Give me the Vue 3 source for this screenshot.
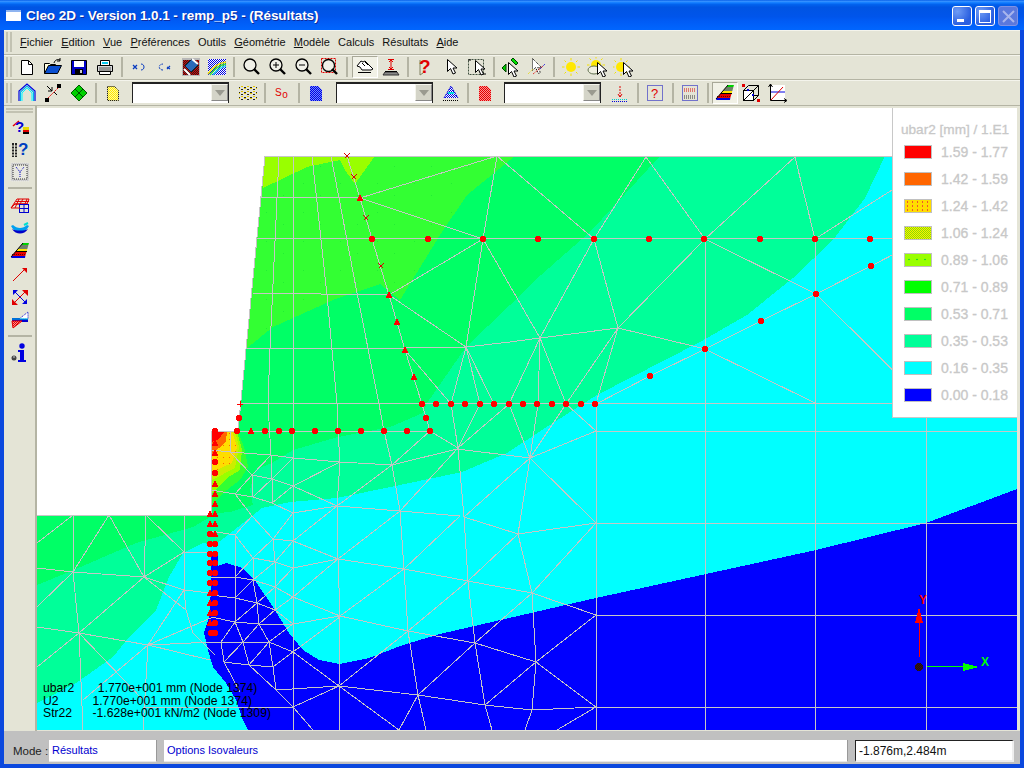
<script setup>
const arrowShape = (dx = 0, dy = 0, fill = '#fff', stroke = '#000') =>
  `<path transform="translate(${dx} ${dy})" d="M6.5 2.5v12l3-3 2.5 5.5 2.5-1-2.5-5h4z" fill="${fill}" stroke="${stroke}"/>`
const sunShape = (cx, cy) =>
  `<circle cx="${cx}" cy="${cy}" r="5" fill="#ffe800"/><path d="M${cx} ${cy - 9}v2.500M${cx} ${cy + 6.500}v2.500M${cx - 9} ${cy}h2.500M${cx + 6.500} ${cy}h2.500M${cx - 6.500} ${cy - 6.500}l1.500 1.500M${cx + 6.500} ${cy - 6.500}l-1.500 1.500M${cx - 6.500} ${cy + 6.500}l1.500-1.500M${cx + 6.500} ${cy + 6.500}l-1.500-1.500" stroke="#f4e000" fill="none"/>`
const layersIcon =
  '<polygon points="13,2 19,2 18.400,4 11.300,4" fill="#00d000"/><polygon points="11.300,4 18.400,4 17.300,8 7.900,8" fill="#70806a"/><polygon points="7.900,8 17.300,8 16.700,10 6.100,10" fill="#ffe800"/><polygon points="6.100,10 16.700,10 15.300,15 1.900,15" fill="#e80000"/><polygon points="1.900,15 15.300,15 15,17 1,17" fill="#0000e0"/><path d="M1 16L13 2M6 10.500h11" stroke="#000" fill="none"/><path d="M2 13.500h13" stroke="#600" stroke-dasharray="1 1"/>'

const I = {
  new: '<path d="M4.5 3.5h7l4 4v10h-11z" fill="#fff" stroke="#000"/><path d="M11.5 3.5v4h4" fill="none" stroke="#000"/>',
  open: '<path d="M1.5 16.5v-10h5l1 1h5v2" fill="#ffffe0" stroke="#000"/><path d="M1.5 16.5l4-8h13l-4 8z" fill="#0a4fd0" stroke="#000"/><path d="M11 6c1-3 3-4 6-3M17 1v3h-3" fill="none" stroke="#000"/>',
  save: '<path d="M2.5 3.5h15v14h-15z" fill="#0000c8" stroke="#000"/><rect x="5" y="4" width="10" height="6" fill="#fff"/><rect x="6" y="12" width="8" height="5" fill="#000"/><rect x="11" y="13" width="2" height="3" fill="#ccc"/>',
  print: '<path d="M5.5 3.5h9v5h-9z" fill="#fff" stroke="#000"/><path d="M7 5h6v2H7z" fill="#08c8f0"/><path d="M2.5 8.5h15v6h-15z" fill="#d8d8d8" stroke="#000"/><path d="M4.5 14.5h11v3h-11z" fill="#fff" stroke="#000"/><path d="M4 11h12M4 13h12" stroke="#555"/>',
  undo: '<path d="M4 8l4 4M8 8l-4 4" stroke="#0a3cc0" stroke-width="1.3"/><path d="M12 7c4 0 4 6 0 6" fill="none" stroke="#0a3cc0"/>',
  redo: '<path d="M8 13C3 13 3 7 8 7" fill="none" stroke="#0a3cc0" stroke-dasharray="2 1"/><path d="M12 12l3-3M12 10l3 2" stroke="#0a3cc0" stroke-width="1.2"/>',
  map: '<rect x="1" y="1" width="18" height="18" fill="#b8b8b8"/><rect x="2" y="3" width="16" height="15" fill="url(#chkR)"/><path d="M4 9l7-7 6 6-7 7z" fill="#2a6ab8" stroke="#123"/><path d="M3 12l6 6M11 2l6 5" stroke="#fff" stroke-width="2"/>',
  rain: '<rect x="1" y="2" width="18" height="16" fill="url(#chkB)"/><path d="M1 17c5-8 11-11 18-12" fill="none" stroke="#f4e400" stroke-width="1.5"/><path d="M3 18c5-7 10-10 16-11" fill="none" stroke="#30e030" stroke-width="1.5"/><path d="M6 18c4-5 8-8 13-9" fill="none" stroke="#30d8f0" stroke-width="1.5"/>',
  zoom: '<circle cx="9" cy="8" r="6" fill="#f0f0e8" stroke="#000" stroke-width="1.3"/><path d="M13 12l5 5" stroke="#000" stroke-width="2.4"/>',
  zplus: '<circle cx="9" cy="8" r="6" fill="#f0f0e8" stroke="#000" stroke-width="1.3"/><path d="M13 12l5 5" stroke="#000" stroke-width="2.4"/><path d="M9 5v6M6 8h6" stroke="#000"/>',
  zminus: '<circle cx="9" cy="8" r="6" fill="#f0f0e8" stroke="#000" stroke-width="1.3"/><path d="M13 12l5 5" stroke="#000" stroke-width="2.4"/><path d="M6 8h6" stroke="#000"/>',
  zfit: '<rect x="2.5" y="1.5" width="14" height="14" fill="none" stroke="#e00000" stroke-dasharray="2 1"/><circle cx="9.5" cy="8.5" r="6" fill="#f0f0e8" stroke="#000" stroke-width="1.3"/><path d="M13 12l5 5" stroke="#000" stroke-width="2.4"/>',
  hand: '<path d="M2 9l4-5 2 1 2-1 3 3 5 5-2 1H7l-2-3z" fill="#fff" stroke="#000"/><path d="M7 6l3 3M10 5l3 3M3 15.500h13" stroke="#000" fill="none"/>',
  ibar: '<path d="M4 15h12l2 3H2z" fill="#888" stroke="#333"/><path d="M7 2.500h6M10 3v9M7 12.500h6" stroke="#e00000"/><path d="M8 5l2-2 2 2M8 10l2 2 2-2" stroke="#e00000" fill="none"/><path d="M4 14.500h12" stroke="#000"/>',
  help: '<path d="M5 18V3M5 18l3-2" stroke="#808060" fill="none"/><text x="4" y="16" font-family="Liberation Sans" font-weight="700" font-size="19" fill="#e00000">?</text>',
  arrow: arrowShape(),
  arrowbox: '<rect x="1.500" y="2.500" width="15" height="15" fill="none" stroke="#405040" stroke-dasharray="2 1"/><path d="M1 3l3 0M16 17l3 0" stroke="#000"/>' + arrowShape(2, 1),
  arrowg: '<path d="M5 7l-4 4 4 4z" fill="#00d000" stroke="#004000"/><path d="M12 1l5 5-2 2-5-5z" fill="#00e000" stroke="#004000"/>' + arrowShape(1, 3),
  arrowd: '<path d="M5.500 1.500v12l3-3 3 6 2-1-3-5h4z" fill="#fff" stroke="#000" stroke-dasharray="1 1"/><path d="M1 17l5-5" stroke="#e8d800" stroke-dasharray="1 1"/><path d="M13 12l5-5" stroke="#0000e0" stroke-dasharray="1 1"/><path d="M6 17l10-8" stroke="#e00000" stroke-dasharray="1 1"/>',
  sun: sunShape(10, 10),
  suncl: sunShape(9, 8) + '<ellipse cx="7" cy="13" rx="6" ry="4" fill="#f0f0e0" stroke="#607050"/>' + arrowShape(4, 3),
  sunar: sunShape(8, 10) + arrowShape(4, 3),
  house: '<path d="M2 18V8l8-7 8 7v10" fill="none" stroke="#0000e0" stroke-width="1.200"/><path d="M3.500 18V9l6.500-6 6.500 6v9" fill="none" stroke="#00b0f0" stroke-width="1.200"/><path d="M5 18V10l5-5 5 5v8" fill="none" stroke="#00ffff"/>',
  line: '<path d="M3 17L17 3" stroke="#e00000" stroke-dasharray="2 1"/><rect x="14" y="1" width="4" height="4" fill="#000"/><rect x="2" y="15" width="4" height="4" fill="#000"/><path d="M4 3l5 5M9 4v4H5M14 12l-3-3" stroke="#000" fill="none"/>',
  diamond: '<path d="M10 2l8 8-8 8-8-8z" fill="#00d000" stroke="#006000"/><path d="M6 6l8 8M14 6l-8 8M10 2l8 8" stroke="#005000" fill="none"/>',
  docy: '<path d="M4.500 3.500h7l4 4v10h-11z" fill="url(#chkYe)" stroke="#000" stroke-dasharray="1 1"/>',
  dots: '<rect x="1" y="2" width="18" height="16" fill="url(#chkY)"/>',
  so: '<text x="3" y="13" font-family="Liberation Sans" font-size="10" fill="#e00000" letter-spacing=".5">S<tspan dy="2">o</tspan></text>',
  docb: '<path d="M4 3h8l4 4v11H4z" fill="url(#chkB2)"/>',
  trib: '<path d="M10 3l-7 12h14z" fill="url(#chkB)"/><path d="M7 10h6" stroke="#00e0e0" stroke-width="2"/><path d="M3 15l7-12 7 12" fill="none" stroke="#0000e0" stroke-dasharray="2 1"/><path d="M2 17.500h16" stroke="#000" stroke-dasharray="1 1"/>',
  docr: '<path d="M4 3h8l4 4v11H4z" fill="url(#chkR2)"/>',
  arr: '<path d="M10 3v11" stroke="#e00000" stroke-dasharray="2 1"/><path d="M8 11l2 3 2-3" fill="none" stroke="#e00000"/><path d="M2 16.500h16" stroke="#00d0d0" stroke-dasharray="1 1"/><path d="M2 18.500h16" stroke="#0000e0" stroke-dasharray="1 1"/>',
  qbox: '<rect x="2.500" y="2.500" width="15" height="15" fill="none" stroke="#0000c0" stroke-dasharray="1 1"/><text x="6" y="15" font-family="Liberation Sans" font-size="13" fill="#e00000">?</text>',
  tbox: '<rect x="2.500" y="2.500" width="15" height="15" fill="none" stroke="#0000c0" stroke-dasharray="1 1"/><path d="M4 6h12M4 8h12" stroke="#e00000" stroke-dasharray="1 1"/><path d="M4 13h12M4 15h12" stroke="#333" stroke-dasharray="1 1"/>',
  layers: layersIcon,
  cube: '<rect x="2.500" y="7.500" width="10" height="10" fill="#fff" stroke="#000"/><path d="M7.500 2.500h10v10h-5M2.500 7.500l5-5M12.500 7.500l5-5M12.500 17.500l5-5M2.500 17.500l10-10" fill="none" stroke="#000"/><rect x="1" y="1" width="3" height="3" fill="#e00000"/><rect x="16" y="16" width="3" height="3" fill="#e00000"/><rect x="6" y="6" width="2" height="2" fill="#0000e0"/><rect x="11" y="11" width="2" height="2" fill="#0000e0"/>',
  axes: '<rect x="3" y="2" width="15" height="15" fill="#fff"/><path d="M3.500 1v16.500H19" fill="none" stroke="#000"/><path d="M1.500 4l2-3 2 3M17 15.500l3 2-3 2" fill="none" stroke="#000"/><path d="M4 9h14" stroke="#0000e0"/><path d="M4 17L16 4" stroke="#e00000"/>',
  qcolor: '<path d="M3 8l6-5" stroke="#e00000" stroke-width="1.500"/><text x="5" y="14" font-family="Liberation Sans" font-weight="700" font-size="15" fill="#0000d0">?</text><rect x="13" y="9" width="6" height="3" fill="#e8d800"/><rect x="13" y="12" width="6" height="2" fill="#e00000"/><rect x="13" y="14" width="6" height="2" fill="#000"/>',
  colq: '<path d="M2 3h2v14H2zM5 3h2v14H5z" fill="#222"/><path d="M2 6h5M2 9h5M2 12h5M2 15h5" stroke="#e4e4d6"/><text x="8" y="15" font-family="Liberation Sans" font-weight="700" font-size="17" fill="#0040c0">?</text>',
  funnel: '<rect x="1" y="1" width="18" height="18" fill="#c8c8c8" stroke="#e8e8e8" stroke-dasharray="1 1"/><path d="M3 3h14v14H3z" fill="#e8e8e0" stroke="#333" stroke-dasharray="1 1"/><path d="M6 5l4 5 4-5M10 10v5" stroke="#0000c0" fill="none" stroke-dasharray="1 1"/>',
  grid: '<path d="M1 13l6-9h12l-2 5H5z" fill="none" stroke="#e00000"/><path d="M4 9h14M6 6.500h13M9 4l-4 9M13 4l-3 5M17 4l-2 5" stroke="#e00000"/><rect x="9.500" y="9.500" width="9" height="8" fill="none" stroke="#0000d0"/><path d="M14 9v8M9 13.500h10" stroke="#0000d0"/><path d="M1 13h9" stroke="#e00000"/>',
  bowl: '<path d="M1 8c4 8 14 8 18 0l-2-1c-4 4-10 4-14 0z" fill="#00a0f0"/><path d="M2 11c4 6 12 6 16 0-4 2-12 2-16 0z" fill="#0000c8"/><path d="M14 7l4-2" stroke="#00e0d0" stroke-width="2"/>',
  vec: '<path d="M3 17L15 5" stroke="#e00000"/><path d="M12 4h5v5z" fill="#e00000"/>',
  vecs: '<path d="M3 17L17 3" stroke="#e00000"/><path d="M3 3l14 14" stroke="#0000e0"/><path d="M12 3h6v6zM2 12v6h6z" fill="#e00000"/><path d="M3 8V3h5zM17 12v5h-5z" fill="#0000e0"/>',
  beam: '<path d="M2 9h16M2 11h16" stroke="#0000d0" stroke-width="2"/><path d="M2 11h10L3 18z" fill="url(#chkR2)" stroke="#e00000"/><path d="M9 9l9-7v7z" fill="#fff" stroke="#0000d0" stroke-dasharray="1 1"/><path d="M2 9h16" stroke="#00e0e0"/>',
  info: '<circle cx="12" cy="3" r="2.700" fill="#0000e0"/><path d="M8 7h6v10h2v2H8v-2h2v-8H8z" fill="#0000e0"/><circle cx="4" cy="15" r="2.500" fill="#444"/><path d="M3 14h2" stroke="#ccc"/>'
}

const tb1 = [
  ['new'], ['open'], ['save'], ['print'], 'sep8',
  ['undo'], ['redo'], ['map'], ['rain'], 'sep8',
  ['zoom'], ['zplus'], ['zminus'], ['zfit'], 'sep10',
  ['hand', true], ['ibar'], 'sep8',
  ['help'], ['arrow'], ['arrowbox'], 'sep8',
  ['arrowg'], ['arrowd'], 'sep8',
  ['sun'], ['suncl'], ['sunar']
]
const tb2 = [
  ['house'], ['line'], ['diamond'], 'sep8', ['docy'], 'combo',
  ['dots'], 'sep8', ['so'], 'sep8', ['docb'], 'combo2',
  ['trib'], 'sep8', ['docr'], 'combo',
  ['arr'], 'sep9', ['qbox'], 'sep9', ['tbox'], 'sep9',
  ['layers', true], ['cube'], ['axes']
]
const left1 = ['qcolor', 'colq', 'funnel']
const left2 = ['grid', 'bowl', 'layers', 'vec', 'vecs', 'beam']

const menu = [
  ['F', 'ichier'], ['E', 'dition'], ['V', 'ue'], ['P', 'références'], ['', 'Outils'],
  ['G', 'éométrie'], ['M', 'odèle'], ['', 'Calculs'], ['', 'Résultats'], ['A', 'ide']
]

const legend = [
  ['#ff0000', '1.59 - 1.77', ''],
  ['#ff6600', '1.42 - 1.59', ''],
  ['#ffdd00', '1.24 - 1.42', 'sw-dots'],
  ['#ccee00', '1.06 - 1.24', 'sw-dith'],
  ['#99ff00', '0.89 - 1.06', 'sw-sparse'],
  ['#00ff00', '0.71 - 0.89', ''],
  ['#00ff66', '0.53 - 0.71', ''],
  ['#00ff99', '0.35 - 0.53', ''],
  ['#00ffff', '0.16 - 0.35', ''],
  ['#0000ff', '0.00 - 0.18', '']
]

const readout = [
  'ubar2       1.770e+001 mm (Node 1374)',
  'U2          1.770e+001 mm (Node 1374)',
  'Str22      -1.628e+001 kN/m2 (Node 1309)'
]

const zones = [
  ['#00ffff', '37,108 1017,108 1017,730 37,730'],
  ['#00ff99', '885,156 865,198 833,240 793,278 747,315 700,342 597,395 542,430 507,453 462,472 400,485 337,498 290,502 262,508 238,527 215,545 203,543 183,553 169,577 156,610 129,637 113,657 76,683 37,703 37,515 211,431 265,156'],
  ['#00ff66', '660,156 590,232 533,282 510,305 466,347 427,403 423,413 390,427 338,437 293,450 272,463 255,470 250,490 253,505 230,512 217,513 193,527 136,543 69,572 37,585 37,515 211,431 265,156'],
  ['url(#lg)', '515,156 467,195 440,235 400,300 380,284 333,300 273,327 247,348 230,370 265,156'],
  ['#99ff00', '265,156 375,156 355,184 345,170 340,160 307,167 263,188 258,170'],
  ['#0000ff', '1017,489 926,523 816,550 706,574 596,598 440,634 403,645 369,658 339,664 319,660 303,650 289,633 273,607 256,582 243,568 226,563 218,566 218,552 211,552 211,590 209,617 204,633 208,650 213,667 226,683 236,700 243,720 248,730 1017,730'],
  ['#33ff33', '238,431 245,450 248,467 240,480 223,493 212,505 211,431'],
  ['#99ff00', '237,431 242,450 240,470 227,478 212,493 211,431'],
  ['#ccee00', '235,431 239,447 235,468 212,480 211,431'],
  ['url(#yel)', '232,431 237,447 232,463 212,472 211,431'],
  ['#ff6600', '227,431 226,442 212,454 211,431'],
  ['#ff0000', '225,431 218,440 211,442 211,431']
]

const mesh = [
  [257, 238.5, 1017, 238.5], [261, 197, 360, 197.5], [252, 293, 389, 295],
  [246, 348, 405, 348, 466, 347, 510, 342, 540, 338, 618, 328, 693, 346, 705, 349],
  [241, 403.5, 1017, 403.5], [211, 431, 430, 431], [596, 431, 1017, 431],
  [596, 523, 1017, 523], [596, 615, 1017, 615], [596, 707, 1017, 707],
  [279, 156, 270, 348, 268, 404, 271, 455],
  [293, 156, 293, 730],
  [312, 156, 327, 295, 337, 404, 338, 431, 340, 462, 337, 506, 338, 559, 340, 616, 339, 686, 340, 730],
  [331, 156, 357, 293, 379, 404, 384, 431, 392, 465, 400, 511, 404, 569, 408, 631, 418, 695, 426, 730],
  [347, 156, 360, 198, 372, 239, 389, 295, 405, 350, 422, 404, 430, 431],
  [458, 448, 464, 517, 468, 581, 475, 643, 485, 705, 492, 730],
  [530, 458, 518, 534, 532, 593, 536, 662, 532, 710, 525, 730],
  [596, 404, 596, 730], [705, 239, 706, 730], [815, 239, 816, 730], [926, 403, 926, 730],
  [360, 198, 497, 156], [360, 198, 483, 239], [389, 295, 483, 239], [483, 239, 497, 156],
  [497, 156, 594, 239], [389, 295, 466, 347], [466, 347, 483, 239], [483, 239, 540, 338],
  [594, 239, 540, 338], [594, 239, 646, 157], [646, 157, 705, 239], [705, 239, 795, 157],
  [795, 157, 815, 239], [815, 239, 892, 190], [594, 239, 618, 328], [705, 239, 618, 328],
  [705, 239, 816, 294, 926, 403], [705, 349, 815, 403],
  [596, 404, 650, 376, 705, 349, 761, 321, 816, 294, 871, 266, 960, 220],
  [540, 338, 509, 404], [540, 338, 538, 404], [540, 338, 566, 404], [618, 328, 566, 404],
  [618, 328, 597, 400], [466, 347, 451, 404], [466, 347, 480, 404], [466, 347, 494, 404],
  [405, 350, 451, 404], [538, 404, 530, 458], [566, 404, 530, 458], [509, 404, 530, 458],
  [566, 404, 596, 431], [596, 431, 530, 458], [530, 458, 596, 523], [530, 458, 464, 517],
  [596, 523, 518, 534, 464, 517], [596, 523, 532, 593], [518, 534, 468, 581], [468, 581, 532, 593, 596, 615],
  [532, 593, 475, 643], [475, 643, 536, 662, 596, 615], [536, 662, 596, 707], [536, 662, 485, 705],
  [485, 705, 532, 710, 596, 707], [596, 707, 540, 740],
  [457, 449, 530, 458], [457, 449, 392, 465], [430, 431, 458, 448], [458, 448, 480, 404],
  [458, 448, 509, 404], [451, 404, 458, 448], [392, 465, 430, 431], [340, 462, 392, 465], [400, 511, 458, 448],
  [400, 511, 460, 516], [400, 511, 337, 506], [337, 506, 392, 465], [293, 458, 340, 462],
  [211, 450, 230, 452, 271, 455, 293, 458], [230, 431, 230, 452, 252, 475, 272, 479, 293, 486, 337, 506],
  [271, 455, 252, 475], [271, 455, 272, 479], [293, 458, 272, 479], [340, 462, 293, 486],
  [252, 475, 235, 494, 211, 490], [252, 475, 253, 497, 272, 503, 293, 513, 337, 506], [235, 494, 253, 497],
  [272, 479, 253, 497], [272, 479, 272, 503], [293, 486, 272, 503],
  [400, 511, 338, 559], [338, 559, 404, 569], [404, 569, 460, 516], [404, 569, 468, 581], [408, 631, 468, 581],
  [408, 631, 475, 643], [408, 631, 340, 616, 404, 569],
  [338, 559, 293, 568, 275, 562, 253, 558, 235, 535, 211, 531], [293, 541, 338, 559],
  [293, 541, 273, 539, 252, 516, 235, 494], [293, 513, 273, 539], [337, 506, 293, 541], [273, 539, 253, 558],
  [252, 516, 235, 535], [275, 562, 273, 539], [293, 541, 275, 562], [253, 558, 235, 577, 211, 577],
  [253, 558, 253, 580, 275, 587, 293, 597, 340, 616], [275, 562, 253, 580], [275, 562, 275, 587], [293, 568, 275, 587],
  [338, 559, 293, 597], [235, 535, 235, 622, 221, 642], [235, 577, 253, 580], [253, 580, 235, 598, 211, 595],
  [253, 580, 257, 603, 275, 610, 293, 624, 340, 616], [275, 587, 257, 603], [275, 587, 275, 610], [293, 597, 275, 610],
  [235, 598, 257, 603], [257, 603, 235, 622, 211, 617], [257, 603, 259, 624], [275, 610, 259, 624],
  [235, 622, 259, 624, 293, 624], [235, 622, 243, 642], [259, 624, 243, 642], [259, 624, 269, 642], [293, 624, 269, 642],
  [211, 642, 221, 642, 243, 642, 269, 642, 293, 652], [221, 642, 224, 662, 249, 665, 273, 667, 293, 652],
  [243, 642, 224, 662], [243, 642, 249, 665], [269, 642, 249, 665], [269, 642, 273, 667], [224, 662, 240, 692],
  [249, 665, 276, 690], [273, 667, 276, 690], [276, 690, 293, 707], [276, 690, 339, 686], [340, 617, 293, 652],
  [293, 652, 339, 686], [293, 707, 339, 686], [293, 707, 313, 730], [339, 686, 399, 730], [339, 686, 418, 695],
  [408, 631, 339, 686], [418, 695, 475, 643], [418, 695, 485, 705], [418, 695, 399, 730],
  [143, 707, 293, 707],
  [37, 568, 73, 572, 144, 577, 184, 590, 210, 593], [37, 627, 79, 633, 148, 645, 213, 642],
  [73, 515, 73, 572, 79, 633, 83, 730], [109, 515, 73, 572], [109, 515, 144, 577], [146, 515, 144, 577],
  [146, 515, 184, 552], [184, 552, 144, 577], [184, 552, 211, 553], [184, 515, 184, 590, 186, 610, 193, 633, 215, 655],
  [73, 515, 37, 543], [73, 572, 37, 607], [144, 577, 79, 633], [79, 633, 37, 667], [144, 577, 186, 610],
  [148, 645, 184, 590], [148, 645, 213, 617], [148, 645, 143, 730], [148, 645, 210, 660], [148, 645, 83, 700],
  [79, 633, 143, 700]
]

const meshPts = mesh.map(m => {
  const out = []
  for (let i = 0; i < m.length; i += 2) out.push(m[i] + ',' + m[i + 1])
  return out.join(' ')
})

const dots = [
  [372, 239], [428, 239], [483, 239], [538, 239], [594, 239], [649, 239], [704, 239], [760, 239], [815, 239], [870, 239],
  [650, 376], [705, 349], [761, 321], [816, 294], [871, 266],
  [422, 404], [436, 404], [451, 404], [465, 404], [480, 404], [494, 404], [509, 404], [523, 404], [537, 404], [552, 404], [566, 404], [581, 404], [595, 404],
  [426, 418], [239, 418],
  [215, 431], [237, 431], [265, 431], [279, 431], [292, 431], [315, 431], [338, 431], [361, 431], [384, 431], [407, 431], [430, 431],
  [215, 462], [215, 473],
  [210, 534], [210, 544], [215, 544], [210, 554], [215, 554], [210, 563], [215, 563], [210, 573], [215, 573], [210, 583], [215, 583],
  [215, 593], [215, 603], [215, 613], [215, 623], [215, 633], [211, 633]
]
const tris = [
  [360, 198], [389, 295], [397, 322], [405, 350], [414, 377], [251, 431],
  [215, 443], [215, 453], [215, 484], [215, 494], [215, 504], [215, 514], [210, 514], [215, 524], [210, 524], [215, 534],
  [210, 593], [210, 603], [210, 613], [210, 623]
].map(([x, y]) => `${x},${y - 4} ${x + 3.5},${y + 3} ${x - 3.5},${y + 3}`)
const crosses = [[347, 156], [354, 177], [366, 218], [381, 266]]
</script>

<template>
  <div class="window">
    <header class="title">
      <span class="appicon"></span>
      <span class="title-text">Cleo 2D - Version 1.0.1 - remp_p5 - (Résultats)</span>
      <span class="winbtns">
        <span class="wb"><i class="wb-min"></i></span>
        <span class="wb"><i class="wb-max"></i></span>
        <span class="wb wb-close">
          <svg width="13" height="13" viewBox="0 0 13 13"><path d="M1 1l11 11M12 1L1 12" stroke="#a8b4ec" stroke-width="2" /></svg>
        </span>
      </span>
    </header>

    <div class="frame">
      <nav class="bar menubar">
        <span class="grip"></span>
        <span v-for="m in menu" :key="m[1]" class="mi"><u>{{ m[0] }}</u>{{ m[1] }}</span>
      </nav>

      <div class="bar tools">
        <span class="grip"></span>
        <template v-for="(it, i) in tb1" :key="i">
          <span v-if="typeof it === 'string'" class="sep" :class="it"></span>
          <span v-else class="btn" :class="{ pressed: it[1] }"><svg width="20" height="20" viewBox="0 0 20 20" v-html="I[it[0]]"></svg></span>
        </template>
      </div>

      <div class="bar tools tools2">
        <span class="grip"></span>
        <template v-for="(it, i) in tb2" :key="i">
          <span v-if="it === 'combo' || it === 'combo2'" class="combo" :class="it"><span class="combo-arrow"><i></i></span></span>
          <span v-else-if="typeof it === 'string'" class="sep" :class="it"></span>
          <span v-else class="btn" :class="{ pressed: it[1] }"><svg width="20" height="20" viewBox="0 0 20 20" v-html="I[it[0]]"></svg></span>
        </template>
      </div>

      <div class="body">
        <aside class="lefttb">
          <span class="hgrip"></span>
          <span v-for="n in left1" :key="n" class="lbtn short"><svg width="20" height="20" viewBox="0 0 20 20" v-html="I[n]"></svg></span>
          <span class="hsep"></span>
          <span v-for="n in left2" :key="n" class="lbtn"><svg width="20" height="20" viewBox="0 0 20 20" v-html="I[n]"></svg></span>
          <span class="hsep"></span>
          <span class="lbtn"><svg width="20" height="20" viewBox="0 0 20 20" v-html="I.info"></svg></span>
        </aside>

        <main class="canvas">
          <svg class="plot" width="980" height="622" viewBox="37 108 980 622">
            <defs>
              <clipPath id="dom"><polygon points="265,156 1017,156 1017,730 37,730 37,515 211,515 211,431 238,431" /></clipPath>
              <pattern id="lg" width="37" height="29" patternUnits="userSpaceOnUse">
                <rect width="37" height="29" fill="#33ff33" />
                <rect x="7" y="9" width="1" height="1" fill="#22ee33" />
                <rect x="24" y="21" width="1" height="1" fill="#22ee33" />
              </pattern>
              <pattern id="yel" width="6" height="6" patternUnits="userSpaceOnUse">
                <rect width="6" height="6" fill="#ffdd00" />
                <rect x="1" y="1" width="1" height="1" fill="#ff6600" />
              </pattern>
              <pattern id="chkB" width="2" height="2" patternUnits="userSpaceOnUse">
                <rect width="2" height="2" fill="#fff" /><rect width="1" height="1" fill="#0000e0" /><rect x="1" y="1" width="1" height="1" fill="#0000e0" />
              </pattern>
              <pattern id="chkB2" width="2" height="2" patternUnits="userSpaceOnUse">
                <rect width="2" height="2" fill="#7088ff" /><rect width="1" height="1" fill="#0000e0" /><rect x="1" y="1" width="1" height="1" fill="#0000e0" />
              </pattern>
              <pattern id="chkR" width="2" height="2" patternUnits="userSpaceOnUse">
                <rect width="2" height="2" fill="#222" /><rect width="1" height="1" fill="#e00000" /><rect x="1" y="1" width="1" height="1" fill="#e00000" />
              </pattern>
              <pattern id="chkR2" width="2" height="2" patternUnits="userSpaceOnUse">
                <rect width="2" height="2" fill="#ff9090" /><rect width="1" height="1" fill="#e00000" /><rect x="1" y="1" width="1" height="1" fill="#e00000" />
              </pattern>
              <pattern id="chkYe" width="2" height="2" patternUnits="userSpaceOnUse">
                <rect width="2" height="2" fill="#fff8a0" /><rect width="1" height="1" fill="#ffe800" /><rect x="1" y="1" width="1" height="1" fill="#ffe800" />
              </pattern>
              <pattern id="chkY" width="6" height="5" patternUnits="userSpaceOnUse">
                <rect x="0" y="0" width="2" height="1" fill="#e8c800" /><rect x="3" y="1" width="2" height="1" fill="#222" />
                <rect x="3" y="3" width="2" height="1" fill="#e8c800" /><rect x="0" y="4" width="2" height="1" fill="#222" />
              </pattern>
            </defs>
            <g clip-path="url(#dom)">
              <polygon v-for="(z, i) in zones" :key="i" :points="z[1]" :fill="z[0]" />
              <polyline v-for="(p, i) in meshPts" :key="i" :points="p" class="edge" />
            </g>
            <polyline class="edge edge-outer" points="1017,156 265,156 238,431 211,431 211,515 37,515" />
            <polygon v-for="(t, i) in tris" :key="'t' + i" :points="t" fill="#ff0000" />
            <circle v-for="(d, i) in dots" :key="'d' + i" :cx="d[0]" :cy="d[1]" r="3.2" fill="#ff0000" />
            <g v-for="(c, i) in crosses" :key="'c' + i" :transform="`translate(${c[0]} ${c[1]})`">
              <path d="M-2.500 -2.500L2.500 2.500M2.500 -2.500L-2.500 2.500" stroke="#d80000" fill="none" />
            </g>
            <path d="M237 404h6M240 401v6" stroke="#ff0000" fill="none" />
            <path d="M919 623V657" stroke="#ff0000" fill="none" />
            <polygon points="919,607 923,623 915,623" fill="#ff0000" />
            <text x="919" y="604" class="axis-t" fill="#ff0000">Y</text>
            <circle cx="919" cy="667" r="4" fill="url(#chkR)" />
            <circle cx="919" cy="667" r="4" fill="#111" opacity=".75" />
            <path d="M927 666.500H963" stroke="#00ff00" fill="none" />
            <polygon points="963,663 979,667 963,671" fill="#00ff00" />
            <text x="981" y="666" class="axis-t" fill="#00ff00">X</text>
          </svg>

          <section class="legend">
            <div class="legend-title">ubar2 [mm] / 1.E1</div>
            <div v-for="l in legend" :key="l[1]" class="legend-row">
              <span class="swatch" :class="l[2]" :style="{ backgroundColor: l[0] }"></span>
              <span>{{ l[1] }}</span>
            </div>
          </section>

          <div class="readout">
            <div v-for="r in readout" :key="r">{{ r }}</div>
          </div>
        </main>
      </div>

      <footer class="status">
        <span class="mode">Mode :</span>
        <span class="field f1">Résultats</span>
        <span class="field f2">Options Isovaleurs</span>
        <span class="field f3">-1.876m,2.484m</span>
      </footer>
    </div>
  </div>
</template>

<style scoped>
.window {
  width: 1024px;
  height: 768px;
  display: flex;
  flex-direction: column;
  overflow: hidden;
  font-family: "Liberation Sans", Arial, sans-serif;
  background: #0b48de;
}
.title {
  height: 30px;
  flex: none;
  display: flex;
  align-items: center;
  background: linear-gradient(180deg, #0058e6 0, #3a93ff 4%, #127dff 9%, #0262ee 15%, #0054e3 24%, #0055eb 56%, #005bf5 70%, #0066ff 100%);
  color: #fff;
}
.appicon {
  width: 15px;
  height: 11px;
  margin: 1px 5px 0 6px;
  background: #fff;
  border-top: 2px solid #8fb4f0;
  box-sizing: border-box;
}
.title-text {
  font-size: 13.5px;
  font-weight: 700;
  letter-spacing: -.05px;
  text-shadow: 1px 1px #0f2a9a;
  white-space: nowrap;
}
.winbtns {
  margin-left: auto;
  margin-right: 6px;
  margin-top: 2px;
  display: flex;
  gap: 3px;
}
.wb {
  width: 20px;
  height: 20px;
  border: 1px solid #fff;
  border-radius: 3px;
  background: radial-gradient(circle at 25% 25%, #6f9cf5, #2a5fe0 70%);
  position: relative;
  display: flex;
  align-items: center;
  justify-content: center;
  box-sizing: border-box;
}
.wb-close {
  background: #5b78dd;
  border-color: #7f92e4;
}
.wb-min {
  position: absolute;
  left: 4px;
  bottom: 3px;
  width: 7px;
  height: 3px;
  background: #fff;
}
.wb-max {
  width: 10px;
  height: 9px;
  border: 1px solid #fff;
  border-top-width: 3px;
  box-sizing: content-box;
}
.frame {
  flex: 1;
  display: flex;
  flex-direction: column;
  margin: 0 4px 4px;
  background: #e4e4d6;
  min-height: 0;
}
.bar {
  display: flex;
  align-items: center;
  flex: none;
  padding-left: 2px;
  border-bottom: 1px solid #b4b4a4;
  box-shadow: inset 0 1px 0 #f4f4ec;
  box-sizing: border-box;
}
.menubar {
  height: 25px;
}
.grip {
  width: 6px;
  height: 20px;
  border-left: 2px solid #c2c2b2;
  border-right: 2px solid #c2c2b2;
  box-sizing: border-box;
  flex: none;
}
.mi {
  font-size: 11px;
  color: #111;
  margin-right: 8.2px;
  white-space: nowrap;
}
.grip + .mi {
  margin-left: 8px;
}
.mi u {
  text-decoration: underline;
}
.tools {
  height: 25px;
}
.tools .grip {
  margin-right: 2px;
}
.tools2 {
  height: 26px;
}
.btn {
  width: 26px;
  height: 22px;
  display: flex;
  align-items: center;
  justify-content: center;
  flex: none;
  box-sizing: border-box;
}
.pressed {
  background: #f1f1e6;
  border: 1px solid;
  border-color: #a8a898 #fff #fff #a8a898;
}
.sep {
  height: 20px;
  display: flex;
  flex: none;
  background: linear-gradient(90deg, #b4b4a4, #b4b4a4) center / 2px 100% no-repeat;
}
.sep8 { width: 8px; }
.sep9 { width: 9px; }
.sep10 { width: 10px; }
.combo {
  width: 97px;
  height: 21px;
  margin: 0 6px;
  flex: none;
  background: #fff;
  border: solid #222;
  border-width: 2px 1px 0 1px;
  box-sizing: border-box;
  display: flex;
  justify-content: flex-end;
}
.combo2 {
  margin: 0 5px 0 7px;
}
.combo-arrow {
  width: 17px;
  height: 17px;
  background: #d4d4c8;
  border: 1px solid;
  border-color: #f4f4ec #888 #888 #f4f4ec;
  box-sizing: border-box;
  display: flex;
  align-items: center;
  justify-content: center;
}
.combo-arrow i {
  border: 5px solid transparent;
  border-top: 6px solid #9a9a90;
  border-bottom: 0;
}
.body {
  flex: 1;
  display: flex;
  min-height: 0;
}
.lefttb {
  width: 33px;
  flex: none;
  display: flex;
  flex-direction: column;
  align-items: center;
  padding-top: 2px;
  box-sizing: border-box;
  border-right: 2px solid #b4b4a4;
}
.hgrip {
  width: 27px;
  height: 5px;
  margin-bottom: 4px;
  border-top: 2px solid #c2c2b2;
  border-bottom: 2px solid #c2c2b2;
  box-sizing: border-box;
  flex: none;
}
.lbtn {
  height: 23px;
  display: flex;
  align-items: center;
  justify-content: center;
  flex: none;
}
.lbtn.short {
  height: 22px;
}
.hsep {
  width: 24px;
  height: 2px;
  flex: none;
  margin: 4px 0;
  background: #b4b4a4;
}
.canvas {
  width: 980px;
  height: 622px;
  margin: 2px 0 0 0;
  flex: none;
  position: relative;
  background: #fff;
  overflow: hidden;
}
.plot {
  display: block;
  shape-rendering: crispEdges;
}
.edge {
  fill: none;
  stroke: #c6c6c6;
  stroke-width: 1;
}
.axis-t {
  font: 700 12px "Liberation Sans", sans-serif;
}
.legend {
  position: absolute;
  left: 855px;
  top: 0;
  width: 125px;
  height: 310px;
  background: #fff;
  border-left: 1px solid #c8c8c8;
  border-bottom: 1px solid #c8c8c8;
  box-sizing: border-box;
  color: #c8c8c8;
  font-size: 14px;
  -webkit-text-stroke: .3px #c8c8c8;
  padding-top: 14px;
}
.legend-title {
  height: 16px;
  line-height: 16px;
  font-size: 13.6px;
  padding-left: 8px;
  white-space: nowrap;
}
.legend-row {
  height: 27.1px;
  display: flex;
  align-items: center;
  gap: 9px;
  padding-left: 11px;
  white-space: nowrap;
}
.swatch {
  width: 28px;
  height: 14px;
  border: 1px solid #c0c0c0;
  box-sizing: border-box;
  flex: none;
}
.sw-dots {
  background-image: radial-gradient(#e43 .6px, transparent .8px);
  background-size: 5px 4px;
}
.sw-dith {
  background-image: repeating-conic-gradient(#ffee00 0 25%, #88dd00 0 50%);
  background-size: 2px 2px;
}
.sw-sparse {
  background-image: radial-gradient(#2d2 .7px, transparent .9px);
  background-size: 8px 11px;
}
.readout {
  position: absolute;
  left: 6px;
  top: 574px;
  font-size: 12.2px;
  line-height: 12.5px;
  color: #000;
  white-space: pre;
}
.status {
  height: 33px;
  flex: none;
  background: #c0c0c0;
  display: flex;
  align-items: center;
  padding-top: 7px;
  box-sizing: border-box;
  font-size: 11px;
}
.mode {
  margin-left: 9px;
  width: 36px;
  flex: none;
  color: #222;
  font-size: 11.5px;
}
.field {
  height: 22px;
  line-height: 21px;
  background: #fff;
  box-sizing: border-box;
  padding-left: 3px;
  flex: none;
  color: #0000d0;
  border-right: 1px solid #999;
  border-bottom: 1px solid #e8e8e8;
}
.f1 {
  width: 108px;
  margin-right: 7px;
}
.f2 {
  width: 684px;
  margin-right: 7px;
}
.f3 {
  width: 159px;
  color: #111;
  font-size: 12px;
  border-top: 1px solid #222;
  border-left: 1px solid #222;
  border-right: 2px solid #eee;
  border-bottom: 2px solid #eee;
}
</style>

<style>
html, body {
  margin: 0;
  background: #000;
}
</style>
